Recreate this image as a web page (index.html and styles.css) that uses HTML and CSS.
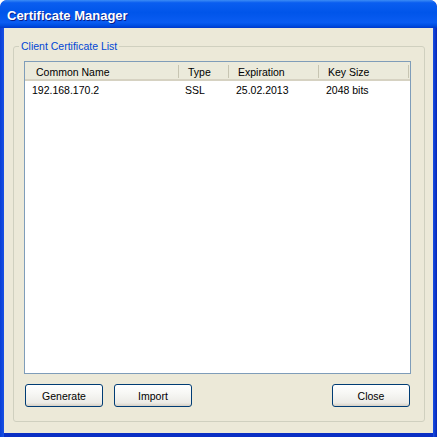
FILE: index.html
```html
<!DOCTYPE html>
<html>
<head>
<meta charset="utf-8">
<title>Certificate Manager</title>
<link rel="stylesheet" href="styles.css">
</head>
<body>
<div class="window">
  <div class="titlebar">Certificate Manager</div>
  <div class="client">
    <fieldset class="group">
      <legend class="group-label">Client Certificate List</legend>
      <div class="group-body">
        <div class="list">
          <div class="list-head">
            <div class="hcell c1">Common Name</div>
            <div class="hcell">Type</div>
            <div class="hcell">Expiration</div>
            <div class="hcell">Key Size</div>
            <div class="hfill"></div>
          </div>
          <div class="list-row">
            <div class="cell c1">192.168.170.2</div>
            <div class="cell">SSL</div>
            <div class="cell">25.02.2013</div>
            <div class="cell">2048 bits</div>
            <div></div>
          </div>
        </div>
        <div class="buttons">
          <button class="btn">Generate</button>
          <button class="btn">Import</button>
          <span class="spacer"></span>
          <button class="btn">Close</button>
        </div>
      </div>
    </fieldset>
  </div>
</div>
</body>
</html>
```

FILE: styles.css
```css
html, body {
  margin: 0;
  padding: 0;
  background: #ffffff;
}

body {
  font-family: "Liberation Sans", Arial, sans-serif;
  font-size: 10.5px;
  color: #000000;
}

.window {
  width: 437px;
  height: 437px;
  box-sizing: border-box;
  padding: 0 4px 4px 4px;
  border-radius: 7px 7px 0 0;
  background: linear-gradient(90deg, #0a3fd6 0%, #1a52e6 1%, #1a52e6 99%, #0526b8 100%);
  display: flex;
  flex-direction: column;
  overflow: hidden;
}

.window::after {
  content: none;
}

.titlebar {
  height: 28px;
  box-sizing: border-box;
  margin: 0 -4px;
  padding: 4px 0 0 7px;
  line-height: 24px;
  font-family: "Liberation Sans", Arial, sans-serif;
  font-weight: bold;
  font-size: 13px;
  color: #ffffff;
  text-shadow: 1px 1px 0 #0a1e8a;
  background: linear-gradient(180deg, #3b8cf5 0%, #0a5ef0 10%, #0055ea 45%, #0a5cf2 80%, #0050e4 90%, #0039cc 100%);
  border-radius: 7px 7px 0 0;
}

.client {
  flex: 1;
  background: #ece9d8;
  padding: 12px 8px 11px 9px;
  border-bottom: 0;
  box-shadow: 0 4px 0 0 #0a2fc4;
}

.group {
  margin: 0;
  padding: 0;
  border: 1px solid #d0d0bf;
  border-radius: 3px;
  min-width: 0;
}

.group-label {
  margin-left: 5px;
  padding: 0 2px;
  line-height: 13px;
  color: #0046d5;
}

.group-body {
  padding: 8px 13px 14px 10px;
  display: flex;
  flex-direction: column;
}

.list {
  height: 313px;
  box-sizing: border-box;
  border: 1px solid #7f9db9;
  background: #ffffff;
}

.list-head,
.list-row {
  display: grid;
  grid-template-columns: 154px 50px 90px 90px 1fr;
}

.list-head {
  background: #ebeadb;
  border-bottom: 2px solid #d6d2c2;
}

.hcell {
  padding: 3px 0 0 9px;
  line-height: 14px;
  white-space: nowrap;
  background: linear-gradient(#c7c5b2, #c7c5b2) no-repeat right 3px / 1px 13px;
}

.hcell.c1 {
  padding-left: 11px;
}

.cell {
  padding: 2px 0 0 7px;
  line-height: 14px;
  white-space: nowrap;
}

.list-row .cell:nth-child(2) {
  padding-left: 6px;
}

.buttons {
  margin-top: 10px;
  padding: 0 1px;
  display: flex;
  gap: 11px;
}

.spacer {
  flex: 1;
}

.btn {
  width: 78px;
  height: 23px;
  box-sizing: border-box;
  margin: 0;
  padding: 0;
  border: 1px solid #003c74;
  border-radius: 3px;
  background: linear-gradient(180deg, #ffffff 0%, #f7f7f4 40%, #ecebe6 85%, #d6d0c5 100%);
  font-family: "Liberation Sans", Arial, sans-serif;
  font-size: 10.5px;
  color: #000000;
}
```
